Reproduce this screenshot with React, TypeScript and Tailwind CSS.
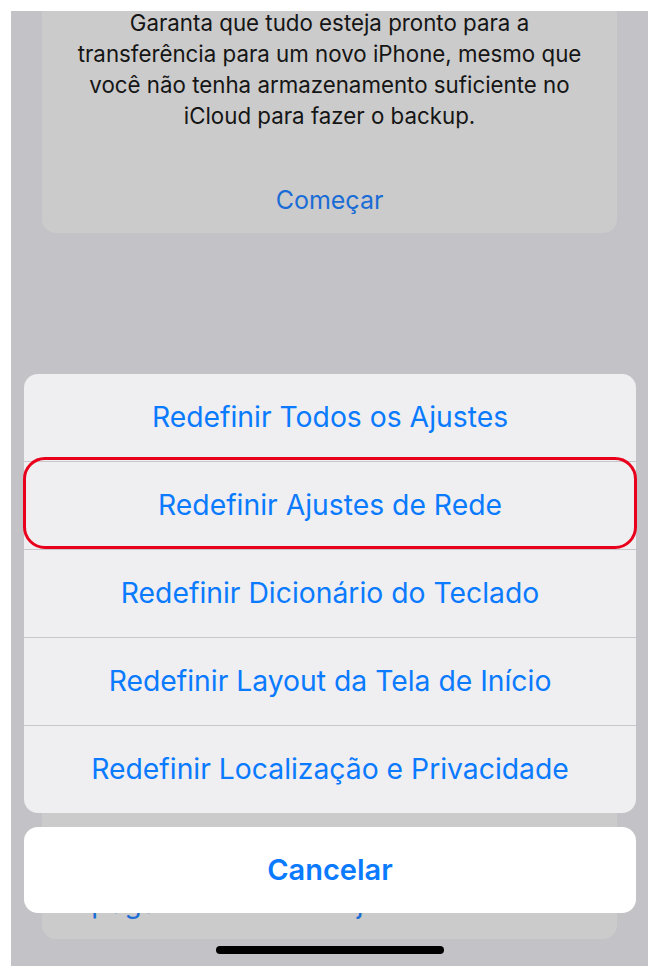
const sheetActions = [
  'Redefinir Todos os Ajustes',
  'Redefinir Ajustes de Rede',
  'Redefinir Dicionário do Teclado',
  'Redefinir Layout da Tela de Início',
  'Redefinir Localização e Privacidade',
];

const HIGHLIGHTED = 1;

function ActionRow({ label, highlighted, last }: { label: string; highlighted: boolean; last: boolean }) {
  return (
    <div className={`relative ${last ? '' : 'border-b border-[#c8c8cc]'}`}>
      <div className="h-[87px] flex items-center justify-center text-[28.3px] leading-[33px] text-[#0a7aff]">
        {label}
      </div>
      {highlighted && (
        <div className="absolute -top-[5px] bottom-0 -left-[1px] -right-[1px] rounded-[22px] border-[3px] border-[#e8001c]" />
      )}
    </div>
  );
}

export default function App() {
  return (
    <div className="w-[660px] h-[978px] bg-white pl-[11px] pt-[11px]" style={{ fontFamily: 'Inter, "Noto Sans", sans-serif' }}>
      <div className="relative w-[637px] h-[955px] overflow-hidden bg-[#c3c3c7] flex flex-col px-[31px]">
        {/* dimmed settings page behind the sheet */}
        <section className="-mt-[24px] pt-[20px] pb-[17px] rounded-[14px] bg-[#cbcbcb] text-center">
          <p className="text-[22.3px] leading-[31px] text-[#151515]">
            Garanta que tudo esteja pronto para a<br />
            transferência para um novo iPhone, mesmo que<br />
            você não tenha armazenamento suficiente no<br />
            iCloud para fazer o backup.
          </p>
          <p className="mt-[54px] text-[25px] leading-[31px] text-[#1a6cd6]">Começar</p>
        </section>

        <div className="flex-1" />

        <section className="mb-[27px] pt-[73px] rounded-[14px] bg-[#cbcbcb] pl-[30px]">
          <div className="h-[72px] flex items-center text-[28px] leading-[33px] text-[#1a6cd6]">
            Apagar Conteúdo e Ajustes
          </div>
        </section>

        {/* action sheet */}
        <div className="absolute left-[13px] right-[12px] bottom-[53px] flex flex-col gap-[14px]">
          <div className="rounded-[14px] bg-[#efeff1]">
            {sheetActions.map((label, i) => (
              <ActionRow key={label} label={label} highlighted={i === HIGHLIGHTED} last={i === sheetActions.length - 1} />
            ))}
          </div>
          <button className="h-[86px] rounded-[14px] bg-white text-[29px] font-semibold text-[#0a7aff]">Cancelar</button>
        </div>

        <div className="absolute bottom-[12px] left-[205px] w-[228px] h-[8px] rounded-full bg-black" />
      </div>
    </div>
  );
}
